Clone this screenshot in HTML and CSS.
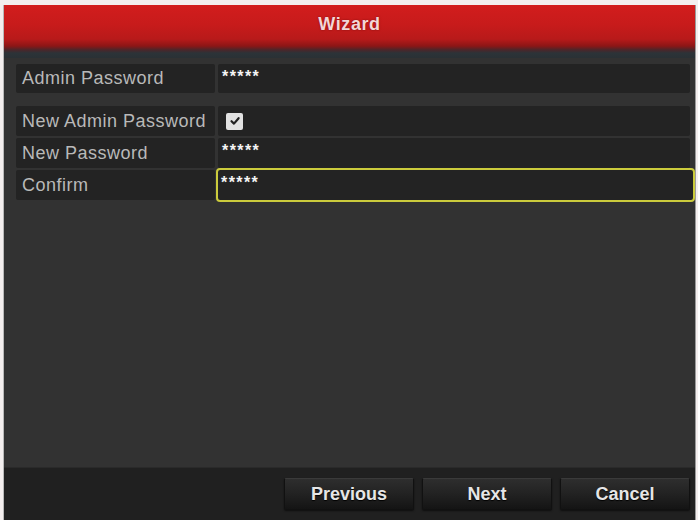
FILE: index.html
```html
<!DOCTYPE html>
<html>
<head>
<meta charset="utf-8">
<link rel="stylesheet" href="styles.css">
</head>
<body>
<div class="window">
  <div class="titlebar"><span class="title">Wizard</span></div>
  <div class="content">
    <div class="group first">
      <div class="row">
        <div class="label">Admin Password</div>
        <div class="value"><span class="mask">*****</span></div>
      </div>
    </div>
    <div class="group">
      <div class="row">
        <div class="label">New Admin Password</div>
        <div class="value">
          <span class="checkbox">
            <svg width="12" height="12" viewBox="0 0 12 12"><path d="M2.5 6.2 L5 8.6 L9.6 3.2" fill="none" stroke="#222" stroke-width="2.2" stroke-linecap="round" stroke-linejoin="round"/></svg>
          </span>
        </div>
      </div>
      <div class="row">
        <div class="label">New Password</div>
        <div class="value"><span class="mask">*****</span></div>
      </div>
      <div class="row">
        <div class="label">Confirm</div>
        <div class="value focused"><span class="mask">*****</span></div>
      </div>
    </div>
  </div>
  <div class="footer">
    <button class="btn">Previous</button>
    <button class="btn">Next</button>
    <button class="btn">Cancel</button>
  </div>
</div>
</body>
</html>
```

FILE: styles.css
```css
html, body {
  margin: 0;
  padding: 0;
  background: #f3eeee;
}

body {
  font-family: "Liberation Sans", Arial, sans-serif;
  padding: 5px 3px 0 3px;
}

.window {
  width: 691px;
  height: 515px;
  display: flex;
  flex-direction: column;
  background: #323232;
  border-left: 1px solid #b9b9b9;
  border-right: 1px solid #9a9a9a;
}

.titlebar {
  height: 53px;
  flex: none;
  display: flex;
  justify-content: center;
  padding-top: 9px;
  box-sizing: border-box;
  background: linear-gradient(to bottom,
    #d21d1d 0px,
    #c71b1b 20px,
    #b81a1a 34px,
    #8c1616 41px,
    #4a262a 45px,
    #2c3338 48px,
    #2a3135 53px);
}

.title {
  color: #f3d6d6;
  font-weight: bold;
  font-size: 18px;
  letter-spacing: 0.6px;
  text-shadow: 0 0 2px rgba(80, 0, 0, 0.6);
}

.content {
  flex: 1;
  padding: 6px 5px 0 12px;
  display: flex;
  flex-direction: column;
}

.group {
  display: flex;
  flex-direction: column;
  gap: 2px;
}

.group.first {
  margin-bottom: 13px;
}

.row {
  display: flex;
  gap: 3px;
  height: 30px;
}

.group.first .row {
  height: 29px;
}

.label {
  width: 199px;
  flex: none;
  background: #232323;
  color: #b9b9b9;
  font-size: 18px;
  letter-spacing: 0.5px;
  display: flex;
  align-items: center;
  padding-left: 6px;
  box-sizing: border-box;
  border-radius: 2px;
}

.value {
  flex: 1;
  background: #232323;
  display: flex;
  align-items: center;
  padding-left: 4px;
  border-radius: 2px;
}

.value.focused {
  outline: 2px solid #cbcb3c;
  outline-offset: 0;
  margin-right: -3px;
  padding-left: 3px;
}

.mask {
  color: #f4f4f4;
  font-size: 16px;
  font-weight: bold;
  letter-spacing: 1.4px;
  padding-bottom: 4px;
}

.checkbox {
  width: 17px;
  height: 17px;
  margin-left: 4px;
  background: #e2e2e2;
  border-radius: 2px;
  display: flex;
  align-items: center;
  justify-content: center;
}

.footer {
  height: 53px;
  flex: none;
  background: #202020;
  border-top: 1px solid #2a2a2a;
  box-sizing: border-box;
  display: flex;
  justify-content: flex-end;
  align-items: flex-start;
  gap: 8px;
  padding: 10px 5px 0 0;
}

.btn {
  width: 130px;
  height: 32px;
  font-family: "Liberation Sans", Arial, sans-serif;
  font-size: 18px;
  font-weight: bold;
  color: #e6e6e6;
  text-shadow: 0 1px 1px #000;
  background: linear-gradient(to bottom, #2e2e2e 0%, #222 50%, #141414 100%);
  border: 1px solid #111;
  border-top-color: #3a3a3a;
  border-radius: 2px;
  box-shadow: 0 1px 2px rgba(0, 0, 0, 0.6);
  padding: 0;
}
```
